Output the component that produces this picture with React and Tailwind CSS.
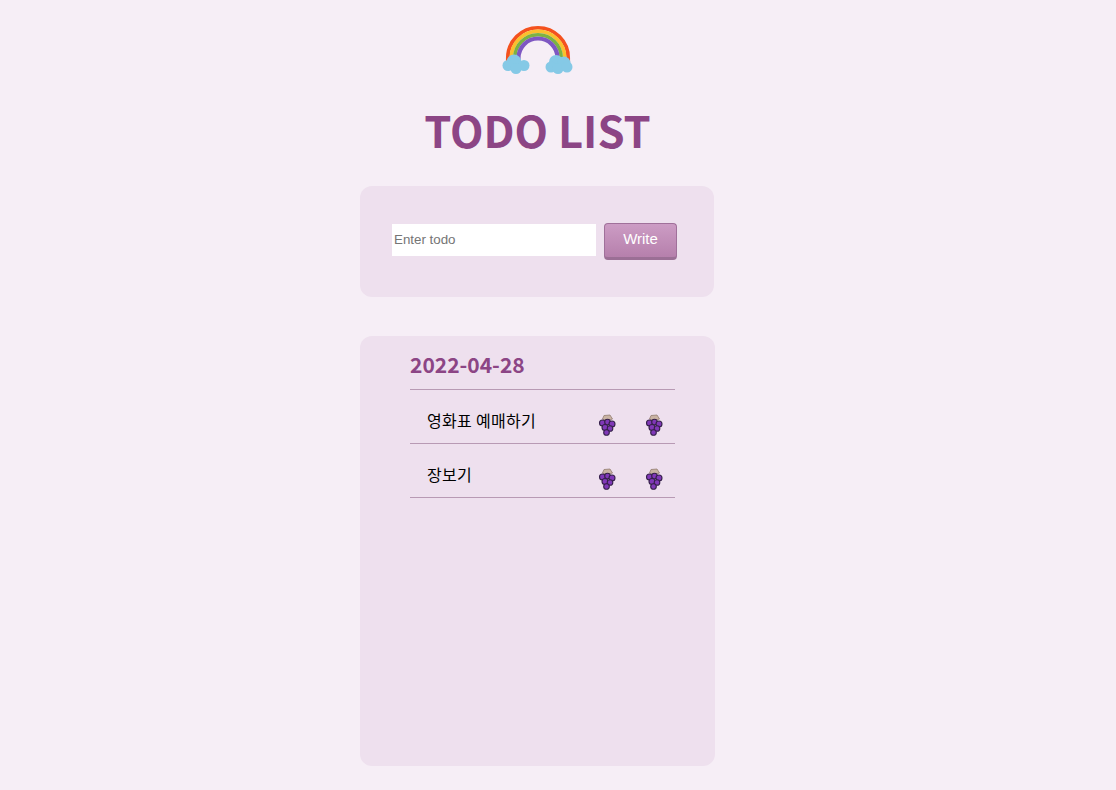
// App.jsx
import React from 'react';

const todos = ['영화표 예매하기', '장보기'];

const Rainbow = () => (
  <svg width="76" height="56" viewBox="0 0 76 56" fill="none">
    <path d="M7.750 44 V36 A30.250 30.250 0 0 1 68.250 36 V44" stroke="#f4511e" strokeWidth="3.600" />
    <path d="M11.250 44 V36 A26.750 26.750 0 0 1 64.750 36 V44" stroke="#fbc02d" strokeWidth="3.600" />
    <path d="M14.750 44 V36 A23.250 23.250 0 0 1 61.250 36 V44" stroke="#7cb342" strokeWidth="3.600" />
    <path d="M18.500 44 V36 A19.500 19.500 0 0 1 57.500 36 V44" stroke="#7e57c2" strokeWidth="4.200" />
    <g fill="#85c9e6">
      <circle cx="14" cy="40" r="7.500" />
      <circle cx="24" cy="43.500" r="5.500" />
      <circle cx="8" cy="43.500" r="5.500" />
      <circle cx="16" cy="46.500" r="5.500" />
      <circle cx="56" cy="40" r="7" />
      <circle cx="64" cy="41" r="6.500" />
      <circle cx="51" cy="45" r="5.500" />
      <circle cx="58" cy="46.500" r="5.500" />
      <circle cx="67" cy="45" r="5.500" />
    </g>
  </svg>
);

const Grapes = () => (
  <svg width="18" height="22" viewBox="0 0 18 22">
    <path d="M4.500 5 L6 1.500 L12 1 L14.500 5 L9 7 Z" fill="#c9b3a3" stroke="#8a7466" strokeWidth="0.700" />
    <g fill="#8038b8" stroke="#35204a" strokeWidth="1.100">
      <circle cx="4.500" cy="9" r="3" />
      <circle cx="9.500" cy="8" r="2.800" />
      <circle cx="14" cy="10" r="3" />
      <circle cx="7" cy="13.500" r="3" />
      <circle cx="12" cy="14.500" r="2.800" />
      <circle cx="8.500" cy="18.500" r="2.800" />
    </g>
  </svg>
);

const App = () => {
  return (
    <div className="min-h-[790px] bg-[#f6eef6] font-['Liberation_Sans',sans-serif]">
      <div className="w-[355px] ml-[360px] flex flex-col">
        <div className="h-[186px] flex flex-col items-center pt-[22px]">
          <Rainbow />
          <h1 className="mt-4 text-[43.500px] leading-[72px] font-semibold text-[#8c4585] font-['Noto_Sans_CJK_KR',sans-serif]">
            TODO LIST
          </h1>
        </div>

        <div className="w-[354px] h-[111px] bg-[#eee0ee] rounded-xl flex items-start pl-8 pt-[37px] gap-2">
          <input
            placeholder="Enter todo"
            className="w-[204px] h-8 mt-px bg-white px-0.5 pb-0.5 text-[13.33px] placeholder:text-[#757575] outline-none"
          />
          <button className="w-[73px] h-[37px] pb-0.5 rounded border border-[#a0709a] border-b-[3px] border-b-[#9b6f95] bg-gradient-to-b from-[#cc9cc4] to-[#b680ac] text-[15px] text-white">
            Write
          </button>
        </div>

        <div className="w-[355px] h-[430px] mt-[39px] bg-[#eee0ee] rounded-xl pl-[50px] pr-10">
          <h2 className="h-[54px] pt-3 text-[21px] leading-[32px] font-semibold text-[#8c4585] border-b border-[#b89ab4] font-['Noto_Sans_CJK_KR',sans-serif]">
            2022-04-28
          </h2>
          {todos.map((todo) => (
            <div key={todo} className="h-[54px] flex items-center border-b border-[#b89ab4] pl-[17px]">
              <span className="flex-1 pt-1.5 text-base tracking-[0.3px] text-black font-['Noto_Sans_CJK_KR',sans-serif]">{todo}</span>
              <div className="flex gap-[29px] pr-[12px] pt-[17px]">
                <Grapes />
                <Grapes />
              </div>
            </div>
          ))}
        </div>
      </div>
    </div>
  );
};

export default App;
